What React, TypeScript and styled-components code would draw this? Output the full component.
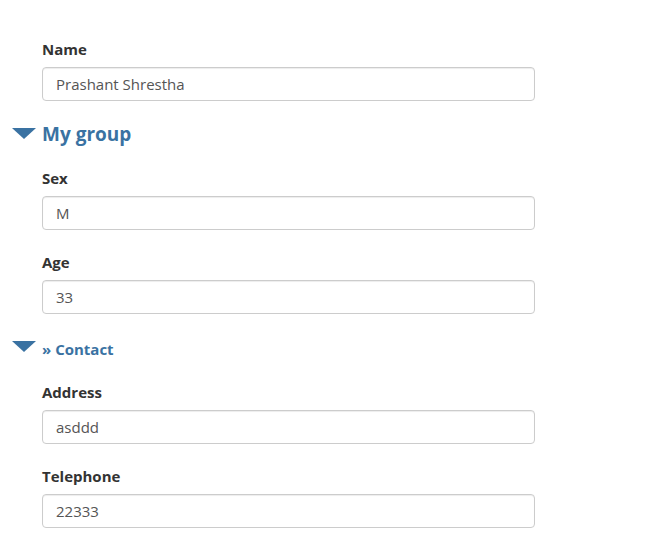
import styled, { createGlobalStyle } from "styled-components";

const GlobalStyle = createGlobalStyle`
  body {
    margin: 0;
    background: #ffffff;
    font-family: "Open Sans", "Noto Sans", sans-serif;
    color: #333333;
  }
  * {
    box-sizing: border-box;
  }
`;

type Field = { label: string; value: string };

const nameField: Field = { label: "Name", value: "Prashant Shrestha" };
const groupFields: Field[] = [
  { label: "Sex", value: "M" },
  { label: "Age", value: "33" },
];
const contactFields: Field[] = [
  { label: "Address", value: "asddd" },
  { label: "Telephone", value: "22333" },
];

function FormField({ field }: { field: Field }) {
  return (
    <Group>
      <Label>{field.label}</Label>
      <Input type="text" defaultValue={field.value} readOnly />
    </Group>
  );
}

export default function App() {
  return (
    <>
      <GlobalStyle />
      <Form>
        <FormField field={nameField} />
        <Heading $size="large">
          <Caret $size="large" />
          My group
        </Heading>
        {groupFields.map((f) => (
          <FormField key={f.label} field={f} />
        ))}
        <Heading $size="small">
          <Caret $size="small" />
          » Contact
        </Heading>
        {contactFields.map((f) => (
          <FormField key={f.label} field={f} />
        ))}
      </Form>
    </>
  );
}

const Form = styled.form`
  display: flex;
  flex-direction: column;
  width: 535px;
  padding: 39px 0 0 42px;
`;

const Group = styled.div`
  display: flex;
  flex-direction: column;
  margin-bottom: 22px;

  &:first-child {
    margin-bottom: 20px;
  }
`;

const Label = styled.label`
  font-size: 15px;
  line-height: 20px;
  font-weight: 700;
  color: #333333;
  margin-bottom: 8px;
`;

const Input = styled.input`
  width: 100%;
  height: 34px;
  padding: 6px 13px;
  font-family: "Open Sans", "Noto Sans", sans-serif;
  font-size: 15px;
  color: #555555;
  background: #ffffff;
  border: 1px solid #cccccc;
  border-radius: 4px;
  box-shadow: inset 0 1px 1px rgba(0, 0, 0, 0.075);

  &:focus {
    outline: none;
  }
`;

interface SizeProps {
  $size: "large" | "small";
}

const Heading = styled.div<SizeProps>`
  display: flex;
  align-items: center;
  margin-left: -30px;
  gap: 6px;
  color: #3a72a2;
  font-weight: 700;
  font-size: ${(p) => (p.$size === "large" ? "19px" : "15px")};
  line-height: ${(p) => (p.$size === "large" ? "26px" : "20px")};
  margin-top: ${(p) => (p.$size === "large" ? "0" : "3px")};
  margin-bottom: ${(p) => (p.$size === "large" ? "21px" : "23px")};
`;

const Caret = styled.span<SizeProps>`
  display: inline-block;
  width: 0;
  height: 0;
  border-left: 12px solid transparent;
  border-right: 12px solid transparent;
  border-top: 11px solid #3a72a2;
  margin-top: ${(p) => (p.$size === "large" ? "-1px" : "-6px")};
`;
